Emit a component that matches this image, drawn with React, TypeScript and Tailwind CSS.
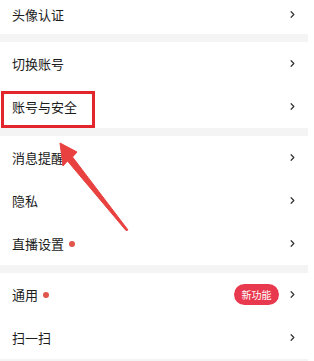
import { ChevronRight } from "lucide-react";

type Row = { label: string; dot?: boolean; badge?: string };

const groups: Row[][] = [
  [{ label: "切换账号" }, { label: "账号与安全" }],
  [{ label: "消息提醒" }, { label: "隐私" }, { label: "直播设置", dot: true }],
  [{ label: "通用", dot: true, badge: "新功能" }, { label: "扫一扫" }],
];

const SettingRow = ({ row, first }: { row: Row; first?: boolean }) => (
  <div
    className={`flex items-center justify-between pl-[12px] pr-[16px] ${
      first ? "h-[34px] pb-[6px]" : "h-[43px]"
    }`}
  >
    <div className="flex items-center gap-[5px]">
      <span className="text-[13px] text-[#1c1c1c] leading-none">{row.label}</span>
      {row.dot && <span className="w-[6px] h-[6px] rounded-full bg-[#e0564a]" />}
    </div>
    <div className="flex items-center gap-[8px]">
      {row.badge && (
        <span className="h-[21px] w-[45px] rounded-full bg-[#e8394f] text-white text-[10px] flex items-center justify-center">
          {row.badge}
        </span>
      )}
      <ChevronRight className="w-[11px] h-[11px] text-[#333]" strokeWidth={2.6} />
    </div>
  </div>
);

const Gap = () => <div className="h-[8px] bg-[#f4f4f4] mr-[6px]" />;

export default function App() {
  return (
    <div
      className="relative w-[314px] h-[361px] overflow-hidden bg-white"
      style={{ fontFamily: '"Noto Sans CJK SC", "Noto Sans", sans-serif' }}
    >
      <SettingRow row={{ label: "头像认证" }} first />
      {groups.map((g, i) => (
        <div key={i}>
          <Gap />
          {g.map((row) => (
            <SettingRow key={row.label} row={row} />
          ))}
        </div>
      ))}
      <Gap />

      {/* annotation: red box + arrow */}
      <div className="absolute left-[1px] top-[91px] w-[94px] h-[37px] border-[3px] border-[#e3262b]" />
      <svg className="absolute left-0 top-0" width="314" height="361" viewBox="0 0 314 361">
        <path
          d="M60 143 L77 152 L72.5 157 L128 230 L126 230.5 L67.5 161 L63 166 Z"
          fill="#e8413f"
          stroke="#e8413f"
          strokeWidth="1"
          strokeLinejoin="round"
        />
      </svg>
    </div>
  );
}
